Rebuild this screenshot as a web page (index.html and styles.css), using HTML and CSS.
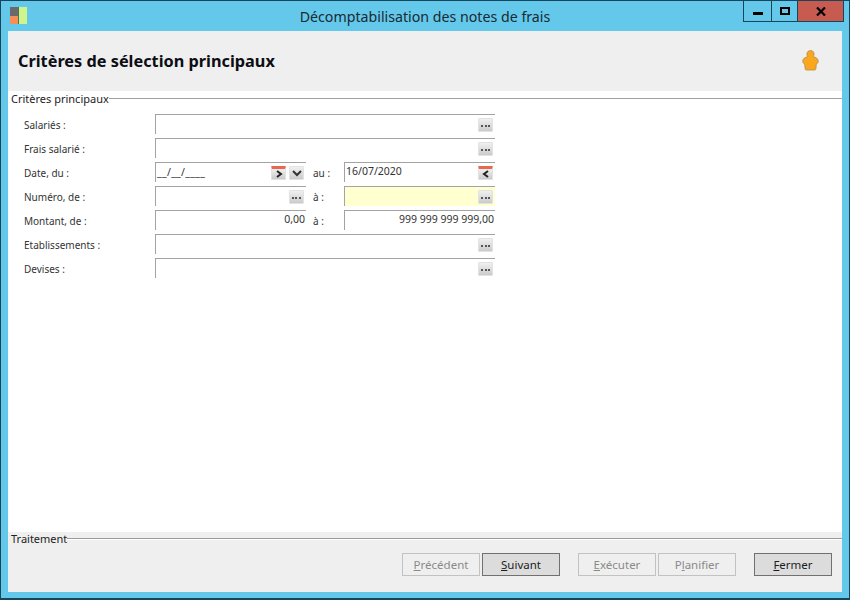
FILE: index.html
```html
<!DOCTYPE html>
<html lang="fr">
<head>
<meta charset="utf-8">
<title>Décomptabilisation des notes de frais</title>
<link rel="stylesheet" href="styles.css">
</head>
<body>
<div class="window">
  <div class="titlebar">
    <svg class="app-icon" width="18" height="18" viewBox="0 0 18 18">
      <rect x="0" y="0" width="9" height="9" fill="#6a6a6a"/>
      <rect x="0" y="9" width="9" height="8" fill="#f58f55"/>
      <rect x="9" y="0" width="8" height="17" fill="#cdf58c"/>
      <rect x="8" y="0" width="1" height="17" fill="#4f6f60"/>
    </svg>
    <div class="title">Décomptabilisation des notes de frais</div>
    <div class="win-buttons">
      <div class="win-btn win-min"><svg width="10" height="4" viewBox="0 0 10 4"><rect width="10" height="3" fill="#000"/></svg></div>
      <div class="win-btn win-max"><svg width="10" height="8" viewBox="0 0 10 8"><rect x="1" y="1" width="8" height="6" fill="none" stroke="#000" stroke-width="2"/></svg></div>
      <div class="win-btn win-close"><svg width="10" height="9" viewBox="0 0 10 9"><path d="M1 .5 L9 8.500 M9 .5 L1 8.500" stroke="#000" stroke-width="2.200" fill="none"/></svg></div>
    </div>
  </div>
  <div class="client">
    <header class="page-head">
      <h1>Critères de sélection principaux</h1>
      <svg class="person" width="17" height="21" viewBox="0 0 17 21">
        <path d="M8.500 .6c2.200 0 3.600 1.500 3.600 3.500 0 1.100-.4 1.900-1 2.600 2.700.5 4.900 1.500 5.100 4.300.1 1.500-.5 2.500-1.900 2.900l-.4 4.700c0 .9-.5 1.400-1.300 1.400H4.400c-.8 0-1.300-.5-1.300-1.400l-.4-4.700C1.300 13.500.7 12.500.8 11c.2-2.800 2.400-3.800 5.100-4.300-.6-.7-1-1.500-1-2.600 0-2 1.400-3.500 3.600-3.500z" fill="#fba61f" stroke="#b58a4a" stroke-width=".8"/>
      </svg>
    </header>
    <main class="content">
      <div class="legend"><span>Critères principaux</span></div>
      <div class="form">
        <label>Salariés :</label>
        <div class="field wide"><span class="ibtn"><i></i></span></div>
        <label>Frais salarié :</label>
        <div class="field wide"><span class="ibtn"><i></i></span></div>
        <label>Date, du :</label>
        <div class="field"><span class="val mask">__/__/____</span>
          <span class="ibtn cal"><svg width="10" height="8" viewBox="0 0 10 8"><path d="M3 1 L7 4 L3 7" fill="none" stroke="#222" stroke-width="2"/></svg></span>
          <span class="ibtn"><svg width="10" height="7" viewBox="0 0 10 7"><path d="M1 1 L5 5 L9 1" fill="none" stroke="#333" stroke-width="2"/></svg></span>
        </div>
        <span class="sep">au :</span>
        <div class="field"><span class="val">16/07/2020</span>
          <span class="ibtn cal"><svg width="10" height="8" viewBox="0 0 10 8"><path d="M7 1 L3 4 L7 7" fill="none" stroke="#222" stroke-width="2"/></svg></span>
        </div>
        <label>Numéro, de :</label>
        <div class="field"><span class="ibtn"><i></i></span></div>
        <span class="sep">à :</span>
        <div class="field yellow"><span class="ibtn"><i></i></span></div>
        <label>Montant, de :</label>
        <div class="field num"><span class="val">0,00</span></div>
        <span class="sep">à :</span>
        <div class="field num"><span class="val">999 999 999 999,00</span></div>
        <label>Etablissements :</label>
        <div class="field wide"><span class="ibtn"><i></i></span></div>
        <label>Devises :</label>
        <div class="field wide"><span class="ibtn"><i></i></span></div>
      </div>
    </main>
    <footer class="foot">
      <div class="legend"><span>Traitement</span></div>
      <div class="actions">
        <div class="group">
          <button class="btn" disabled><u>P</u>récédent</button>
          <button class="btn"><u>S</u>uivant</button>
        </div>
        <div class="group">
          <button class="btn" disabled><u>E</u>xécuter</button>
          <button class="btn" disabled>P<u>l</u>anifier</button>
        </div>
        <button class="btn"><u>F</u>ermer</button>
      </div>
    </footer>
  </div>
</div>
</body>
</html>
```
FILE: styles.css
```css
* { box-sizing: border-box; }
html, body { margin: 0; padding: 0; }
body { width: 850px; height: 600px; overflow: hidden; font-family: "Noto Sans", "Open Sans", sans-serif; font-size: 11px; color: #111; }
.window { width: 850px; height: 600px; background: #63c8ea; border: 1px solid #17455c; border-bottom-width: 2px; display: flex; flex-direction: column; }
.titlebar { height: 30px; flex: none; display: flex; align-items: flex-start; position: relative; }
.app-icon { margin: 6px 0 0 9px; }
.title { position: absolute; left: 0; right: 0; top: 6px; text-align: center; font-size: 14.200px; line-height: 19px; color: #1a2a33; }
.win-buttons { margin-left: auto; margin-right: 5px; display: flex; height: 21px; border: 1px solid #17455c; border-top: 0; }
.win-btn { display: flex; align-items: center; justify-content: center; height: 20px; }
.win-min { width: 28px; border-right: 1px solid #17455c; padding-top: 5px; }
.win-max { width: 26px; border-right: 1px solid #17455c; }
.win-close { width: 45px; background: #c75b50; }
.client { flex: 1; margin: 0 7px 6px 7px; background: #fff; display: flex; flex-direction: column; min-height: 0; }
.page-head { height: 60px; flex: none; background: #efefef; display: flex; align-items: center; justify-content: space-between; padding: 0 23px 0 10px; }
.page-head h1 { margin: 0; font-family: "Noto Sans", sans-serif; font-size: 16.300px; font-weight: 700; color: #0d0d14; }
.person { margin-top: -1px; }
.content { flex: 1; background: #fff; min-height: 0; }
.legend { display: flex; align-items: center; height: 15px; padding-left: 3px; line-height: 15px; color: #222; }
.legend::after { content: ""; flex: 1; height: 2px; background: linear-gradient(#a0a0a0 50%, #fff 50%); }
.form { margin: 8px 0 0 16px; display: grid; grid-template-columns: 131px 151px 38px 151px; grid-auto-rows: 20px; row-gap: 4px; align-items: center; }
.form label { grid-column: 1; font-size: 10px; color: #333; padding-top: 2px; }
.sep { padding: 2px 0 0 7px; font-size: 10px; color: #333; }
.field { height: 20px; align-self: stretch; border-top: 1px solid #a3a3a3; border-left: 1px solid #a3a3a3; display: flex; align-items: center; justify-content: flex-end; gap: 3px; padding: 1px 2px 0 1px; background: #fff; color: #333; font-size: 10.500px; }
.wide { grid-column: 2 / 5; }
.yellow { background: #ffffcf; }
.num { padding-right: 1px; }
.val { margin-right: auto; padding-bottom: 5px; }
.num .val { margin-right: 0; }
.mask { letter-spacing: .3px; padding-bottom: 3px; }
.ibtn { width: 15px; height: 14px; flex: none; background: linear-gradient(#f0f0f0, #cbcbcb); border: 1px solid #e2e2e2; border-radius: 1px; display: flex; align-items: center; justify-content: center; }
.ibtn i { width: 9px; height: 2px; background: repeating-linear-gradient(90deg, #555 0 2px, transparent 2px 3.500px); margin-top: 1px; }
.cal { border-top: 3px solid #e8694d; }
.foot { height: 60px; flex: none; background: #efefef; }
.foot .legend { margin-top: -1px; }
.foot .legend::after { background: linear-gradient(#9a9a9a 50%, #fff 50%); }
.actions { display: flex; justify-content: flex-end; gap: 18px; padding: 7px 10px 0 0; }
.group { display: flex; gap: 2px; }
.btn { width: 78px; height: 23px; padding: 0; font: inherit; font-size: 11.500px; line-height: 20px; background: #dcdcdc; border: 1px solid #707070; color: #1c1c1c; }
.btn:disabled { background: #efefef; border-color: #c2c2c2; color: #8a8a8a; }
```
